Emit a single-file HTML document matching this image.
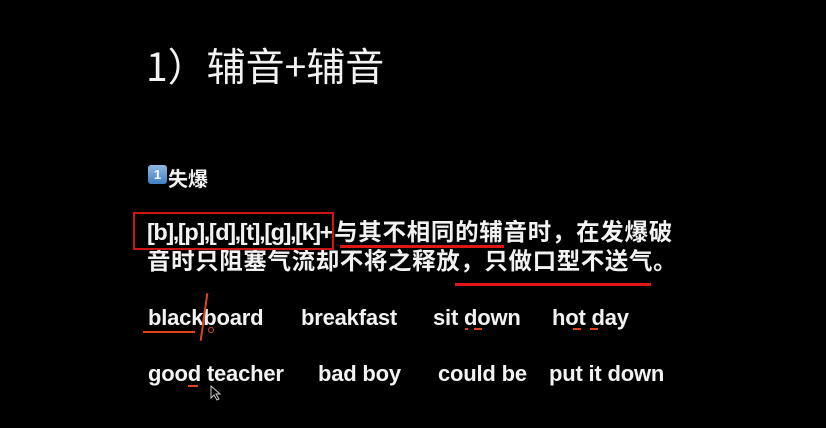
<!DOCTYPE html>
<html><head><meta charset="utf-8"><style>
html,body{margin:0;padding:0;background:#000;width:826px;height:428px;overflow:hidden;position:relative}
.t{position:absolute;color:#f2f2f2;white-space:nowrap;font-family:"Liberation Sans","Noto Sans CJK SC",sans-serif}
.w{font-size:22px;font-weight:bold;letter-spacing:-0.2px;top:305px}
.w2{top:361px}
.r{position:absolute;background:#e01515}
.o{position:absolute;background:#e0451a}
</style></head><body>
<div class="t" style="left:146px;top:37px;font-size:39px;font-family:'Noto Sans CJK SC',sans-serif;font-weight:400">1）辅音+辅音</div>
<div style="position:absolute;left:148px;top:165px;width:19px;height:19px;border-radius:3px;background:linear-gradient(#8fb8e0,#3f7fc4);color:#fff;font:bold 13px 'Liberation Sans',sans-serif;text-align:center;line-height:19px">1</div>
<div class="t" style="left:168px;top:163px;font-size:20px;font-weight:bold">失爆</div>
<div class="t" style="left:147px;top:218px;font-size:23.5px;font-weight:bold;line-height:29px"><span style="letter-spacing:-1.4px">[b],[p],[d],[t],[g],[k]</span><span style="letter-spacing:0.7px">+与其不相同的辅音时，在发爆破</span><br><span style="letter-spacing:0.6px">音时只阻塞气流却不将之释放，只做口型不送气。</span></div>
<div style="position:absolute;left:133px;top:212px;width:197px;height:34px;border:2px solid #d01515"></div>
<div class="r" style="left:340px;top:245px;width:164px;height:3px"></div>
<div class="r" style="left:455px;top:283px;width:196px;height:3px"></div>
<div class="t w" style="left:148px">blackboard</div>
<div class="t w" style="left:301px">breakfast</div>
<div class="t w" style="left:433px">sit down</div>
<div class="t w" style="left:552px">hot day</div>
<div class="t w w2" style="left:148px">good teacher</div>
<div class="t w w2" style="left:318px">bad boy</div>
<div class="t w w2" style="left:438px">could be</div>
<div class="t w w2" style="left:549px">put it down</div>
<div class="o" style="left:143px;top:331px;width:52px;height:2px"></div>
<div class="o" style="left:203px;top:293px;width:2px;height:48px;transform:rotate(8deg)"></div>
<div style="position:absolute;left:208px;top:327px;width:4px;height:4px;border:1.5px solid #e0451a;border-radius:50%"></div>
<div class="o" style="left:465px;top:328px;width:3px;height:2px"></div>
<div class="o" style="left:474px;top:328px;width:8px;height:2px"></div>
<div class="o" style="left:573px;top:328px;width:8px;height:2px"></div>
<div class="o" style="left:590px;top:328px;width:8px;height:2px"></div>
<div class="o" style="left:188px;top:385px;width:10px;height:2px"></div>
<svg style="position:absolute;left:210px;top:385px" width="12" height="16"><path d="M1 1 L1 13 L4 10 L7 15 L9 14 L6 9 L10 9 Z" fill="#000" stroke="#ccc" stroke-width="1"/></svg>
</body></html>
